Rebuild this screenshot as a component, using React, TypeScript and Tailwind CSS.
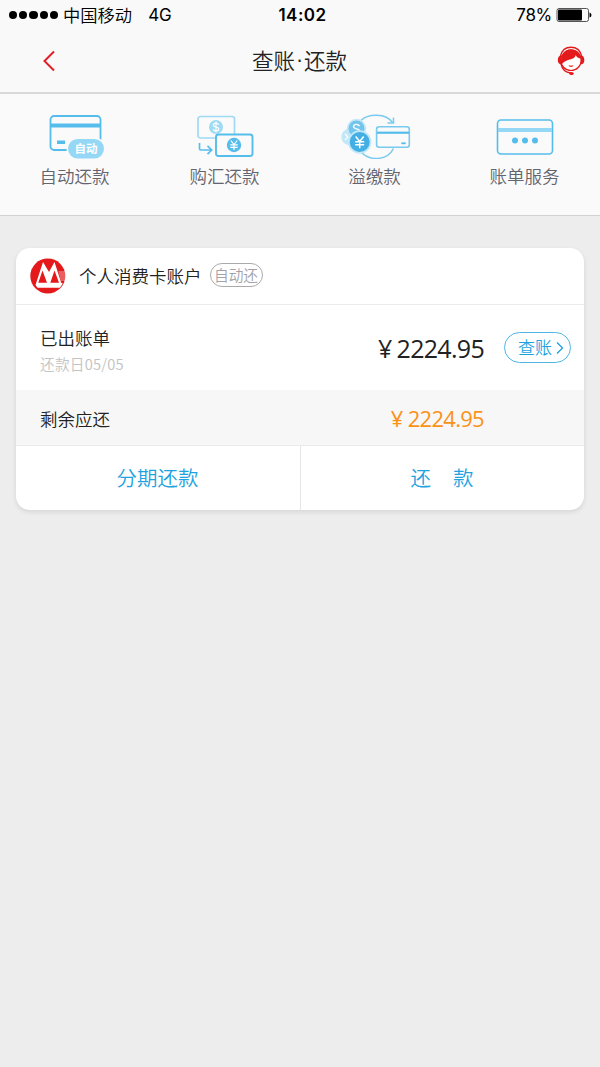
import type { ReactNode } from 'react'

const BLUE = '#55bdec'
const LIGHT_BLUE = '#94d8f6'

function AutoRepayIcon() {
  return (
    <svg width="62" height="48" viewBox="0 0 62 48" fill="none">
      <rect x="6.500" y="5" width="50" height="34" rx="3.500" stroke={BLUE} strokeWidth="1.800" />
      <rect x="7" y="12.500" width="49" height="4" fill={BLUE} />
      <rect x="13" y="29.500" width="8" height="3.500" fill={BLUE} />
      <rect x="22.500" y="26.500" width="39" height="22" rx="11" fill="#fafafa" />
      <rect x="24" y="28" width="36" height="19.500" rx="9.700" fill={LIGHT_BLUE} />
      <text x="30.500" y="42" fontSize="11.500" fontWeight="700" fill="#fff" fontFamily="'Noto Sans CJK SC', sans-serif">自动</text>
    </svg>
  )
}

function ExchangeIcon() {
  return (
    <svg width="60" height="48" viewBox="0 0 60 48" fill="none">
      <rect x="3" y="5.500" width="36.500" height="21.500" rx="2.500" stroke="#9edaf4" strokeWidth="1.700" />
      <circle cx="21" cy="16" r="7" fill="#9edaf4" />
      <path d="M23.700 13.800c-.5-1.200-1.500-1.700-2.700-1.700-1.600 0-2.700.7-2.700 1.900 0 2.900 5.500 1.200 5.500 4.100 0 1.200-1.100 1.900-2.800 1.900-1.400 0-2.400-.6-2.900-1.800M21 10.500v11" stroke="#fff" strokeWidth="1.200" />
      <rect x="21" y="23.500" width="36.500" height="21.500" rx="2.500" fill="#fafafa" stroke={BLUE} strokeWidth="1.900" />
      <circle cx="39" cy="34" r="7.200" fill={BLUE} />
      <path d="m35.800 29.500 3.200 4 3.200-4M35.300 33.800h7.400M35.300 36.400h7.400M39 33.500v5.500" stroke="#fff" strokeWidth="1.200" />
      <path d="M4.500 32v5.500q0 1.500 1.500 1.500h10M12.500 34.800l4.200 4.200-4.200 4.200" stroke={BLUE} strokeWidth="1.700" />
    </svg>
  )
}

function OverpayIcon() {
  return (
    <svg width="76" height="48" viewBox="0 0 76 48" fill="none">
      <path d="M24 9.500C31 2.300 49 2 55.500 11.500M24.500 41.500c9 9 26 8 32-4" stroke="#79caf0" strokeWidth="1.500" />
      <path d="M50.500 12h6V6.500" stroke="#79caf0" strokeWidth="1.500" />
      <circle cx="12.500" cy="26" r="8.200" fill="#c1e7f8" />
      <path d="m8 23 3 3-3 3" stroke="#fff" strokeWidth="1.200" />
      <circle cx="19.500" cy="17.500" r="9.700" fill="#c1e7f8" />
      <circle cx="19.500" cy="17.500" r="8" fill="#72c5ed" />
      <path d="M22.500 15.300c-.5-1.300-1.600-2-3-2-1.800 0-3 .9-3 2.200 0 3.300 6.100 1.300 6.100 4.600" stroke="#fff" strokeWidth="1.300" />
      <circle cx="22.700" cy="31" r="11.700" fill="#c1e7f8" />
      <circle cx="22.700" cy="31" r="10" fill="#43afe4" />
      <path d="m18.700 25.500 4 5 4-5M18.200 30.800h9M18.200 33.800h9M22.700 30.500v6.800" stroke="#fff" strokeWidth="1.500" />
      <rect x="39.600" y="15.800" width="32.700" height="20.500" rx="2.500" fill="#fafafa" stroke="#79caf0" strokeWidth="1.600" />
      <path d="M40 21.700h32" stroke={BLUE} strokeWidth="2.200" />
      <path d="M64.300 32.300h4.500" stroke={BLUE} strokeWidth="1.800" />
    </svg>
  )
}

function BillServiceIcon() {
  return (
    <svg width="60" height="48" viewBox="0 0 60 48" fill="none">
      <rect x="2.500" y="9" width="55" height="34" rx="3.500" stroke={BLUE} strokeWidth="1.600" />
      <rect x="3" y="17" width="54" height="4" fill={LIGHT_BLUE} />
      <circle cx="20" cy="29.500" r="3" fill={BLUE} />
      <circle cx="30" cy="29.500" r="3" fill={BLUE} />
      <circle cx="40" cy="29.500" r="3" fill={BLUE} />
    </svg>
  )
}

function ServiceIcon() {
  return (
    <svg width="28" height="32" viewBox="0 0 28 32" fill="none">
      <path d="M3.500 11C4.800 5.300 8.500 2.200 14 2.200S23.200 5.300 24.500 11" stroke="#e3191b" strokeWidth="1.400" />
      <circle cx="14" cy="15.300" r="10.200" fill="#fff" stroke="#e3191b" strokeWidth="1.200" />
      <path d="M4.300 20C2.800 10 8 4.200 14 4.200c5.500 0 9.300 3.500 10 9.300-2.500-.2-4.500-1.200-5.300-3.200-1.500 5.700-9.700 2.700-14.400 9.700z" fill="#e3191b" />
      <path d="M4.500 10.500C2 10.500.8 12.300.8 15s1.200 4.300 3.700 4.300zM23.800 10.500c2.500 0 3.500 1.800 3.500 4.500s-1 4.300-3.500 4.300z" fill="#e3191b" />
      <path d="M3.800 18.500c1.200 5.500 4.700 9 10 9.500" stroke="#e3191b" strokeWidth="1.300" />
      <ellipse cx="14.500" cy="28.500" rx="2.200" ry="1.600" fill="#e3191b" />
      <path d="M11.500 20.300c1.700.5 3.300.5 5 0-.8 2.200-4.200 2.200-5 0z" fill="#e3191b" />
    </svg>
  )
}

function BankLogo() {
  return (
    <svg width="36" height="36" viewBox="0 0 36 36">
      <circle cx="17.800" cy="18" r="17.500" fill="#e3191b" />
      <path d="M28.500 14h7M29 16h7M29.500 18h6.500M30 20h6M30.500 22h5" stroke="#fff" strokeWidth="1.100" opacity=".6" />
      <path d="M13 4 5.500 27l2 2.700h22.300l3-3.900-1.700-1.300L24.500 4l-5.500 10z" fill="#fff" />
      <path d="M12.500 12.500 8.300 24.800H17zM24.500 12.500 20.300 24.800H29z" fill="#e3191b" />
    </svg>
  )
}

const features: { label: string; icon: ReactNode }[] = [
  { label: '自动还款', icon: <AutoRepayIcon /> },
  { label: '购汇还款', icon: <ExchangeIcon /> },
  { label: '溢缴款', icon: <OverpayIcon /> },
  { label: '账单服务', icon: <BillServiceIcon /> },
]

export default function App() {
  return (
    <div className="w-[600px] h-[1067px] overflow-hidden bg-[#ededed] font-['Noto_Sans_CJK_SC',sans-serif] whitespace-nowrap">
      {/* Status bar */}
      <div className="h-[30px] bg-[#f9f9f9] grid grid-cols-3 items-center text-black leading-[30px]">
        <div className="flex items-center pl-[9px] h-[30px]">
          <div className="flex gap-[2px] w-[54px]">
            {[0, 1, 2, 3, 4].map(i => (
              <span key={i} className="size-[8.200px] rounded-full bg-black" />
            ))}
          </div>
          <span className="text-[17.300px] font-[350]">中国移动</span>
          <span className="font-['Inter',sans-serif] text-[17px] ml-[16px]">4G</span>
        </div>
        <div className="font-['Inter',sans-serif] font-semibold text-[17px] text-center tracking-[0.500px] pl-[5px]">14:02</div>
        <div className="flex items-center justify-end pr-[8px]">
          <span className="font-['Inter',sans-serif] text-[17px] tracking-[-0.300px] mr-[4px]">78%</span>
          <svg width="36" height="16" viewBox="0 0 36 16">
            <rect x="1" y="1.500" width="31.500" height="13" rx="2" fill="none" stroke="#555" />
            <rect x="2" y="2.500" width="24" height="11" rx="1" fill="#000" />
            <path d="M33.500 5.500q2 .5 2 2.500t-2 2.500z" fill="#000" />
          </svg>
        </div>
      </div>

      {/* Nav bar */}
      <div className="h-[64px] bg-[#f9f9f9] border-b-2 border-[#d9d9d9] grid grid-cols-[1fr_auto_1fr] items-center pl-[42px] pr-[15px]">
        <svg width="30" height="22" viewBox="0 0 30 22" fill="none">
          <path d="M12 1.500 2.500 11l9.500 9.500" stroke="#e02026" strokeWidth="2" />
        </svg>
        <div className="text-[21.500px] leading-[30px] text-[#222] font-[350] flex items-center -ml-[28px] -mt-[2px]">
          <span>查账</span>
          <span className="w-[9px] text-center font-['Liberation_Sans',sans-serif]">·</span>
          <span>还款</span>
        </div>
        <div className="flex justify-end">
          <ServiceIcon />
        </div>
      </div>

      {/* Shortcuts */}
      <div className="h-[122px] bg-[#fafafa] border-b border-[#d2d2d2] grid grid-cols-4 pt-[17px]">
        {features.map(f => (
          <div key={f.label} className="flex flex-col items-center pr-px">
            {f.icon}
            <span className="text-[17.500px] leading-[26px] text-[#64646e] mt-[4px] font-[350]">{f.label}</span>
          </div>
        ))}
      </div>

      {/* Account card */}
      <div className="mx-4 mt-[32px] h-[262px] bg-white rounded-[14px] shadow-[0_2px_5px_rgba(0,0,0,0.1)] overflow-hidden text-[#222]">
        <div className="h-[57px] border-b border-[#ececec] flex items-center pl-[14px]">
          <BankLogo />
          <span className="text-[17.500px] ml-[13px] font-[350]">个人消费卡账户</span>
          <span className="ml-[8px] -mt-[3px] w-[53px] h-[24px] rounded-full border border-[#aaa] text-[14.700px] leading-[22px] text-center text-[#a2a2a8] font-[350]">自动还</span>
        </div>

        <div className="h-[85px] flex items-center pl-[24px] pr-[13px]">
          <div className="pt-[7px]">
            <div className="text-[17.500px] leading-[26px] font-[350]">已出账单</div>
            <div className="text-[14.700px] leading-[26px] text-[#c3c3c3] tracking-[0.200px] font-[350]">还款日05/05</div>
          </div>
          <div className="ml-auto flex items-center font-['Open_Sans','Noto_Sans_CJK_SC',sans-serif] text-[#222] text-[25px] tracking-[-0.700px] pt-[2px]">
            <span className="mr-[5px]">¥</span>
            <span>2224.95</span>
          </div>
          <div className="ml-[20px] w-[67px] h-[31px] rounded-full border border-[#4eb5e6] flex items-center justify-center pl-[7px] text-[#1ea2e0] text-[17px] leading-[27px] font-[350]">
            <span className="-mt-[2px]">查账</span>
            <svg className="ml-[4px]" width="8" height="14" viewBox="0 0 8 14" fill="none">
              <path d="m1 1.500 5.500 5.500L1 12.500" stroke="#1ea2e0" strokeWidth="1.300" />
            </svg>
          </div>
        </div>

        <div className="h-[56px] bg-[#f7f7f7] border-b border-[#eaeaea] flex items-center pl-[24px] pr-[100px]">
          <span className="text-[17.500px] pt-[3px] font-[350]">剩余应还</span>
          <div className="ml-auto flex items-center font-['Open_Sans','Noto_Sans_CJK_SC',sans-serif] text-[#fb9218] text-[22px] tracking-[-0.700px] pt-[2px]">
            <span className="mr-[5px]">¥</span>
            <span>2224.95</span>
          </div>
        </div>

        <div className="h-[64px] grid grid-cols-[285px_1fr] text-[20.500px] text-[#1ea2e0] leading-[62px] text-center font-[350]">
          <div className="border-r border-[#e6e6e6] pr-px">分期还款</div>
          <div className="flex justify-center gap-[22px] pr-px">
            <span>还</span>
            <span>款</span>
          </div>
        </div>
      </div>
    </div>
  )
}
